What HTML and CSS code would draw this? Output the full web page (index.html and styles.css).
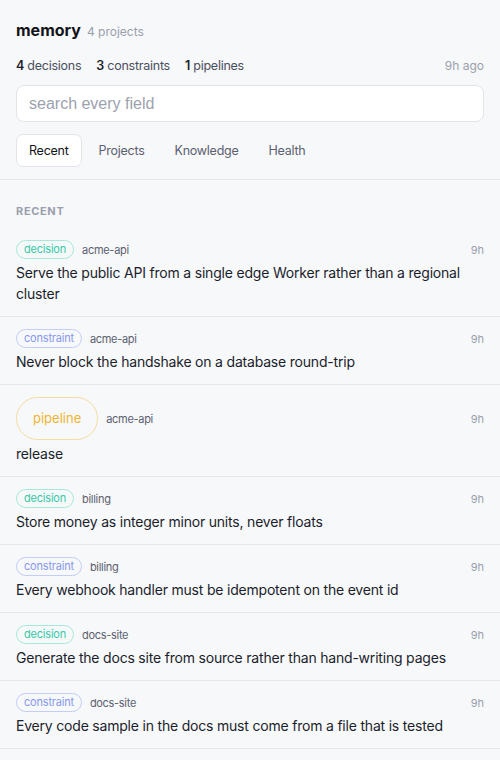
FILE: index.html
```html
<!DOCTYPE html>
<html lang="en">
<head>
<meta charset="utf-8">
<title>memory</title>
<link rel="stylesheet" href="styles.css">
</head>
<body>
<div class="app">
  <header class="top">
    <div class="title-row">
      <h1 class="title">memory</h1>
      <span class="subtitle">4 projects</span>
    </div>
    <div class="stats-row">
      <div class="stats">
        <span class="stat"><b>4</b> decisions</span>
        <span class="stat"><b>3</b> constraints</span>
        <span class="stat"><b>1</b> pipelines</span>
      </div>
      <span class="updated">9h ago</span>
    </div>
    <input class="search" type="text" placeholder="search every field">
    <nav class="tabs">
      <span class="tab active">Recent</span>
      <span class="tab">Projects</span>
      <span class="tab">Knowledge</span>
      <span class="tab">Health</span>
    </nav>
  </header>

  <section class="feed">
    <h2 class="section-label">Recent</h2>
    <ul class="items">
      <li class="item">
        <div class="meta"><span class="badge decision">decision</span><span class="project">acme-api</span><span class="time">9h</span></div>
        <p class="text">Serve the public API from a single edge Worker rather than a regional cluster</p>
      </li>
      <li class="item">
        <div class="meta"><span class="badge constraint">constraint</span><span class="project">acme-api</span><span class="time">9h</span></div>
        <p class="text">Never block the handshake on a database round-trip</p>
      </li>
      <li class="item">
        <div class="meta"><span class="badge pipeline">pipeline</span><span class="project">acme-api</span><span class="time">9h</span></div>
        <p class="text">release</p>
      </li>
      <li class="item">
        <div class="meta"><span class="badge decision">decision</span><span class="project">billing</span><span class="time">9h</span></div>
        <p class="text">Store money as integer minor units, never floats</p>
      </li>
      <li class="item">
        <div class="meta"><span class="badge constraint">constraint</span><span class="project">billing</span><span class="time">9h</span></div>
        <p class="text">Every webhook handler must be idempotent on the event id</p>
      </li>
      <li class="item">
        <div class="meta"><span class="badge decision">decision</span><span class="project">docs-site</span><span class="time">9h</span></div>
        <p class="text">Generate the docs site from source rather than hand-writing pages</p>
      </li>
      <li class="item">
        <div class="meta"><span class="badge constraint">constraint</span><span class="project">docs-site</span><span class="time">9h</span></div>
        <p class="text">Every code sample in the docs must come from a file that is tested</p>
      </li>
      <li class="item">
        <div class="meta"><span class="badge decision">decision</span><span class="project">docs-site</span><span class="time">9h</span></div>
        <p class="text">Keep every page reachable within two clicks of the index</p>
      </li>
    </ul>
  </section>
</div>
</body>
</html>
```
FILE: styles.css
```css
* { box-sizing: border-box; }

html, body {
  margin: 0;
  padding: 0;
  background: #f7f8fa;
}

body {
  font-family: Inter, "Noto Sans", sans-serif;
  color: #1b1e2b;
}

.app {
  display: flex;
  flex-direction: column;
}

/* header block */
.top {
  display: flex;
  flex-direction: column;
  padding: 20px 16px 12px;
  border-bottom: 1px solid #e4e6eb;
}

.title-row {
  display: flex;
  align-items: baseline;
  gap: 6px;
  height: 24px;
}

.title {
  margin: 0;
  font-size: 16px;
  font-weight: 700;
  color: #111318;
}

.subtitle {
  font-size: 12px;
  color: #9aa0ad;
}

.stats-row {
  display: flex;
  justify-content: space-between;
  align-items: center;
  margin-top: 10px;
  height: 22px;
}

.stats {
  display: flex;
  gap: 15px;
  font-size: 12.5px;
  letter-spacing: -0.25px;
  color: #4a4f5e;
}

.stat b {
  font-weight: 600;
  color: #1b1e2b;
}

.updated {
  font-size: 12px;
  color: #9aa0ad;
}

.search {
  margin-top: 9px;
  height: 37px;
  width: 100%;
  padding: 0 12px;
  border: 1px solid #e2e4ea;
  border-radius: 8px;
  background: #fff;
  font-family: "Liberation Sans", Arial, sans-serif;
  font-size: 16px;
  color: #1b1e2b;
  outline: none;
}

.search::placeholder {
  color: #9ca1ad;
}

.tabs {
  display: flex;
  gap: 4px;
  margin-top: 12px;
}

.tab {
  display: flex;
  align-items: center;
  height: 33px;
  padding: 0 12px;
  border: 1px solid transparent;
  border-radius: 7px;
  font-size: 12.5px;
  letter-spacing: -0.25px;
  color: #5b6070;
}

.tab.active {
  background: #fff;
  border-color: #e2e4ea;
  color: #111318;
}

/* feed */
.feed {
  display: flex;
  flex-direction: column;
  padding-top: 24px;
}

.section-label {
  margin: 0 16px 10px;
  font-size: 11px;
  font-weight: 700;
  letter-spacing: 0.06em;
  text-transform: uppercase;
  color: #9aa0ad;
  line-height: 14px;
}

.items {
  list-style: none;
  margin: 0;
  padding: 0;
}

.item {
  display: flex;
  flex-direction: column;
  gap: 3px;
  padding: 12px 16px 12px;
  border-bottom: 1px solid #e4e6eb;
}

.meta {
  display: flex;
  align-items: center;
  gap: 8px;
}

.badge {
  display: inline-flex;
  align-items: center;
  height: 19px;
  padding: 0 7px;
  border: 1px solid;
  border-radius: 999px;
  font-size: 11px;
  letter-spacing: -0.2px;
  line-height: 1;
}

.badge.decision {
  color: #35cba8;
  border-color: #a6e9d9;
}

.badge.constraint {
  color: #8798ee;
  border-color: #c4cdf6;
}

.badge.pipeline {
  height: 43px;
  padding: 0 16px;
  font-size: 13px;
  letter-spacing: 0;
  color: #f1b431;
  border-color: #f4dc9e;
}

.project {
  font-size: 11px;
  letter-spacing: -0.3px;
  color: #5b6070;
}

.time {
  margin-left: auto;
  font-size: 11px;
  color: #9aa0ad;
}

.text {
  margin: 0;
  font-size: 14px;
  letter-spacing: -0.2px;
  line-height: 21px;
  color: #1b1e2b;
}
```
